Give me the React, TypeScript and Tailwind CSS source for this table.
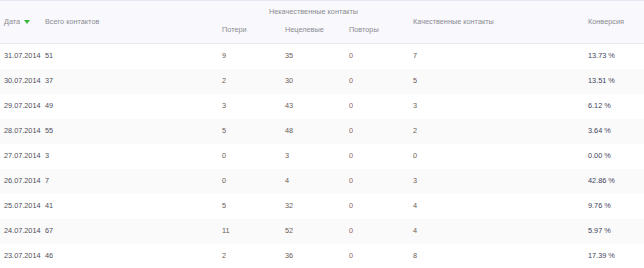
const rows = [
  { date: "31.07.2014", total: 51, loss: 9, untarget: 35, repeat: 0, good: 7, conv: "13.73 %" },
  { date: "30.07.2014", total: 37, loss: 2, untarget: 30, repeat: 0, good: 5, conv: "13.51 %" },
  { date: "29.07.2014", total: 49, loss: 3, untarget: 43, repeat: 0, good: 3, conv: "6.12 %" },
  { date: "28.07.2014", total: 55, loss: 5, untarget: 48, repeat: 0, good: 2, conv: "3.64 %" },
  { date: "27.07.2014", total: 3, loss: 0, untarget: 3, repeat: 0, good: 0, conv: "0.00 %" },
  { date: "26.07.2014", total: 7, loss: 0, untarget: 4, repeat: 0, good: 3, conv: "42.86 %" },
  { date: "25.07.2014", total: 41, loss: 5, untarget: 32, repeat: 0, good: 4, conv: "9.76 %" },
  { date: "24.07.2014", total: 67, loss: 11, untarget: 52, repeat: 0, good: 4, conv: "5.97 %" },
  { date: "23.07.2014", total: 46, loss: 2, untarget: 36, repeat: 0, good: 8, conv: "17.39 %" },
];

export default function App() {
  return (
    <div className="w-[644px] h-[268px] overflow-hidden bg-white font-['Liberation_Sans',Arial,sans-serif] text-[7.3px]">
      <table className="w-[644px] table-fixed border-collapse">
        <colgroup>
          <col className="w-[41px]" />
          <col className="w-[177px]" />
          <col className="w-[63px]" />
          <col className="w-[64px]" />
          <col className="w-[64px]" />
          <col className="w-[175px]" />
          <col className="w-[60px]" />
        </colgroup>
        <thead className="bg-[#f8f8fd] text-[#8c8c92]">
          <tr className="h-[22px] border-t border-r border-[#e6e6f2]">
            <th rowSpan={2} className="pl-1 text-left font-normal align-middle whitespace-nowrap">
              Дата
              <span className="inline-block ml-[4px] align-middle w-0 h-0 border-l-[3px] border-r-[3px] border-t-[4px] border-l-transparent border-r-transparent border-t-[#3cb83c]" />
            </th>
            <th rowSpan={2} className="pl-1 text-left font-normal align-middle">Всего контактов</th>
            <th colSpan={3} className="text-center font-normal align-bottom pb-[5px]">Некачественные контакты</th>
            <th rowSpan={2} className="pl-1 text-left font-normal align-middle">Качественные контакты</th>
            <th rowSpan={2} className="pl-1 text-left font-normal align-middle">Конверсия</th>
          </tr>
          <tr className="h-[21px] border-b border-r border-[#e6e6f2]">
            <th className="pl-1 text-left font-normal align-top pt-[2px]">Потери</th>
            <th className="pl-1 text-left font-normal align-top pt-[2px]">Нецелевые</th>
            <th className="pl-1 text-left font-normal align-top pt-[2px]">Повторы</th>
          </tr>
        </thead>
        <tbody>
          {rows.map((r, i) => (
            <tr key={r.date} className={i % 2 === 1 ? "h-[25px] bg-[#fafafa]" : "h-[25px] bg-white"}>
              <td className="pl-1 text-[#4f4f5a] whitespace-nowrap">{r.date}</td>
              <td className="pl-1 text-[#4f4f5a]">{r.total}</td>
              <td className="pl-1 text-[#6a5d56]">{r.loss}</td>
              <td className="pl-1 text-[#6a5d56]">{r.untarget}</td>
              <td className="pl-1 text-[#8f6666]">{r.repeat}</td>
              <td className="pl-1 text-[#6a5d56]">{r.good}</td>
              <td className="pl-1 text-[#42425a]">{r.conv}</td>
            </tr>
          ))}
        </tbody>
      </table>
    </div>
  );
}
